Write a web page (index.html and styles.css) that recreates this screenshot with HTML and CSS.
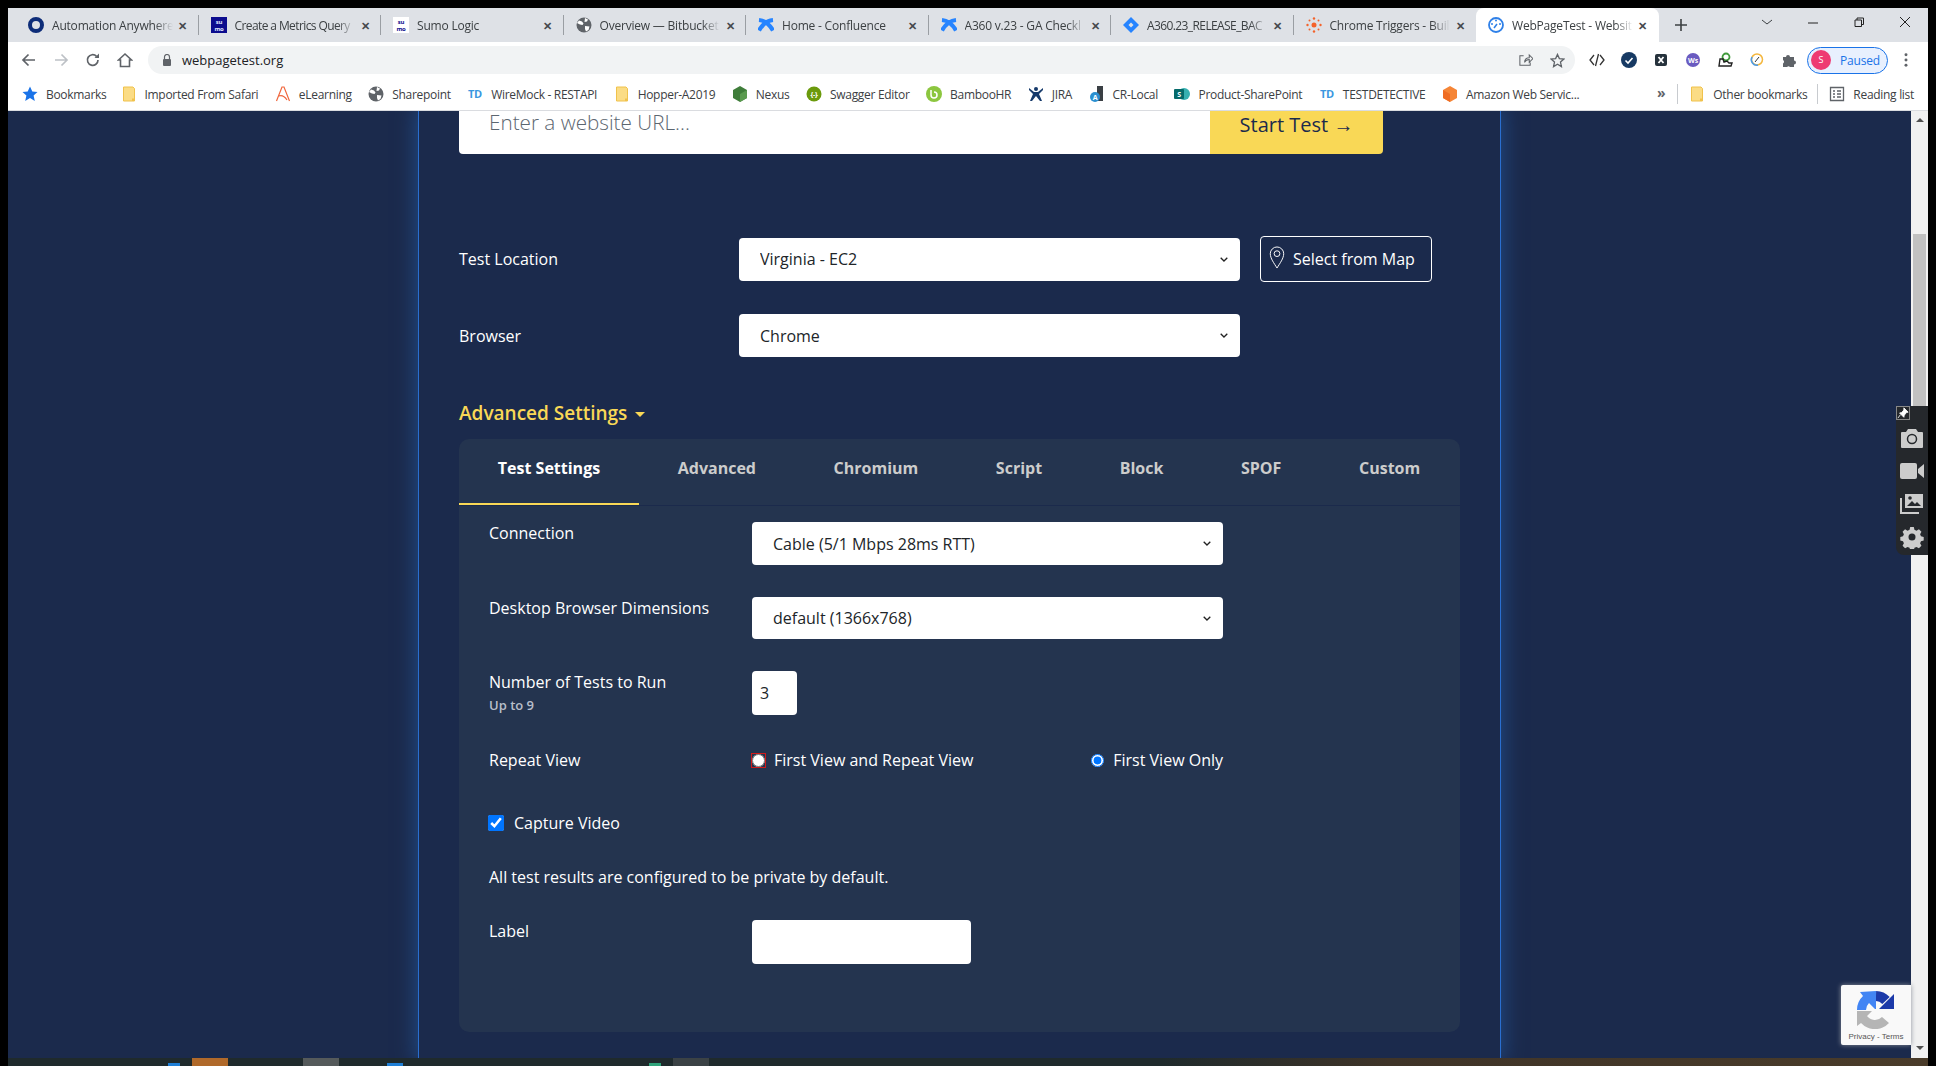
FILE: index.html
```html
<!DOCTYPE html>
<html lang="en">

<head>
    <meta charset="UTF-8">
    <meta name="viewport" content="width=device-width, initial-scale=1.0">
    <title>WebPageTest - Website Performance and Optimization Test</title>
    <link rel="stylesheet" href="styles.css">
</head>

<body>
    <svg class="defs" width="0" height="0">
        <symbol id="globe" viewBox="0 0 16 16">
            <circle cx="8" cy="8" r="7.5" fill="#5f6368" />
            <path d="M3 3.500l3 1 1.500 2-1 1.500-2.500-.5-3-1.500zM9 1l3 1.500-1 2-2.500.5zM9 9l4.500.5-1 3.500-2.500 1.500-1-2.500z" fill="#fff" />
        </symbol>
        <symbol id="confluence" viewBox="0 0 16 16">
            <path d="M1 13.500c4-7 8-10 14-10.500M1 3c6 .5 10 3.500 14 10.500" fill="none" stroke="#2684ff" stroke-width="4.200" />
        </symbol>
        <symbol id="folder" viewBox="0 0 16 16">
            <path d="M2.500 1h9.500l1.500 1.500v12.500h-11z" fill="#fbdc85" stroke="#f0c24c" />
            <path d="M11 12.500h2.500v2.500h-2.500z" fill="#f0c24c" />
        </symbol>
    </svg>

    <div class="window">
        <!-- browser chrome -->
        <div class="tabstrip">
            <div class="tab">
                <svg class="favicon" viewBox="0 0 16 16"><circle cx="8" cy="8" r="6" fill="none" stroke="#0d2c78" stroke-width="4" /></svg>
                <span class="tab-title">Automation Anywhere</span>
                <span class="tab-close">✕</span>
            </div>
            <div class="tab">
                <svg class="favicon" viewBox="0 0 16 16"><rect width="16" height="16" fill="#0c0c8e" /><text class="sumo-text" x="8" y="7" fill="#dfe6ff">su</text><text class="sumo-text" x="8" y="13.500" fill="#dfe6ff">mo</text></svg>
                <span class="tab-title tab-title-tight">Create a Metrics Query</span>
                <span class="tab-close">✕</span>
            </div>
            <div class="tab">
                <svg class="favicon" viewBox="0 0 16 16"><rect width="16" height="16" fill="#fff" /><text class="sumo-text" x="8" y="7" fill="#0c0c8e">su</text><text class="sumo-text" x="8" y="13.500" fill="#0c0c8e">mo</text></svg>
                <span class="tab-title">Sumo Logic</span>
                <span class="tab-close">✕</span>
            </div>
            <div class="tab">
                <svg class="favicon"><use href="#globe" /></svg>
                <span class="tab-title">Overview — Bitbucket</span>
                <span class="tab-close">✕</span>
            </div>
            <div class="tab">
                <svg class="favicon"><use href="#confluence" /></svg>
                <span class="tab-title">Home - Confluence</span>
                <span class="tab-close">✕</span>
            </div>
            <div class="tab">
                <svg class="favicon"><use href="#confluence" /></svg>
                <span class="tab-title">A360 v.23 - GA Checkl</span>
                <span class="tab-close">✕</span>
            </div>
            <div class="tab">
                <svg class="favicon" viewBox="0 0 16 16"><path d="M8 0l8 8-8 8-8-8z" fill="#2684ff" /><path d="M8 5.500l2.500 2.500-2.500 2.500-2.500-2.500z" fill="#dee1e6" /></svg>
                <span class="tab-title tab-title-tight">A360.23_RELEASE_BAC</span>
                <span class="tab-close">✕</span>
            </div>
            <div class="tab tab-last">
                <svg class="favicon" viewBox="0 0 16 16" fill="#f4622a"><circle cx="8" cy="8" r="2.500" /><circle cx="8" cy="1.500" r="1.200" /><circle cx="8" cy="14.500" r="1.200" /><circle cx="1.500" cy="8" r="1.200" /><circle cx="14.500" cy="8" r="1.200" /><circle cx="3.500" cy="3.500" r="1" /><circle cx="12.500" cy="3.500" r="1" /><circle cx="3.500" cy="12.500" r="1" /><circle cx="12.500" cy="12.500" r="1" /></svg>
                <span class="tab-title">Chrome Triggers - Buil</span>
                <span class="tab-close">✕</span>
            </div>
            <div class="tab tab-active">
                <svg class="favicon" viewBox="0 0 16 16"><circle cx="8" cy="8" r="7" fill="none" stroke="#2f80e8" stroke-width="1.800" /><circle cx="8" cy="3.500" r="1" fill="#2f80e8" /><circle cx="12" cy="7" r="1" fill="#2f80e8" /><circle cx="4" cy="7" r="1" fill="#2f80e8" /><path d="M6 11l3-4" stroke="#2f80e8" stroke-width="1.500" /></svg>
                <span class="tab-title">WebPageTest - Websit</span>
                <span class="tab-close">✕</span>
            </div>
            <svg class="new-tab" viewBox="0 0 12 12"><path d="M6 0v12M0 6h12" stroke="#3c4043" stroke-width="1.600" /></svg>
            <div class="window-controls">
                <svg viewBox="0 0 12 12"><path d="M1 4l5 4 5-4" fill="none" stroke="#3c4043" /></svg>
                <svg viewBox="0 0 12 12"><path d="M1 7h10" stroke="#222" /></svg>
                <svg viewBox="0 0 12 12"><path d="M2 4h6.500v6.500h-6.500zM4 4v-2h6.500v6.500h-2" fill="none" stroke="#222" /></svg>
                <svg viewBox="0 0 12 12"><path d="M1 1l10 10M11 1l-10 10" stroke="#222" /></svg>
            </div>
        </div>

        <div class="toolbar">
            <svg class="tool-icon" viewBox="0 0 16 16"><path d="M14 8h-12M7.500 2.500l-5.500 5.500 5.500 5.500" fill="none" stroke="#5f6368" stroke-width="1.700" /></svg>
            <svg class="tool-icon" viewBox="0 0 16 16"><path d="M2 8h12M8.500 2.500l5.500 5.500-5.500 5.500" fill="none" stroke="#bdc1c6" stroke-width="1.700" /></svg>
            <svg class="tool-icon" viewBox="0 0 16 16"><path d="M13 8a5.300 5.300 0 1 1-1.500-3.700" fill="none" stroke="#5f6368" stroke-width="1.700" /><path d="M14 1.500v4.500h-4.500z" fill="#5f6368" /></svg>
            <svg class="tool-icon" viewBox="0 0 16 16"><path d="M1.500 8l6.500-6 6.500 6h-2v6.500h-9v-6.500z" fill="none" stroke="#5f6368" stroke-width="1.600" /></svg>
            <div class="omnibox">
                <svg class="lock" viewBox="0 0 10 12"><path d="M2.500 5v-2a2.500 2.500 0 0 1 5 0v2" fill="none" stroke="#5f6368" stroke-width="1.200" /><rect x="1" y="5" width="8" height="7" rx="1" fill="#5f6368" /></svg>
                <span class="url">webpagetest.org</span>
                <svg class="omni-icon omni-share" viewBox="0 0 16 16"><path d="M6 3h-4v10h11v-3M7 10c0-3 2-5 5-5v-3l4 4-4 4v-3c-2 0-4 1-5 3z" fill="none" stroke="#5f6368" stroke-width="1.100" /></svg>
                <svg class="omni-icon" viewBox="0 0 16 16"><path d="M8 1.500l2 4.500 4.800.5-3.600 3.200 1 4.800-4.200-2.500-4.200 2.500 1-4.800-3.600-3.200 4.800-.5z" fill="none" stroke="#5f6368" stroke-width="1.400" /></svg>
            </div>
            <div class="extensions">
                <svg viewBox="0 0 16 16"><path d="M5 3l-4 5 4 5M11 3l4 5-4 5M9.500 2l-3 12" fill="none" stroke="#333" stroke-width="1.300" /></svg>
                <svg viewBox="0 0 16 16"><circle cx="8" cy="8" r="8" fill="#173a63" /><path d="M4.500 8.500l2.500 2.500 4.500-5" fill="none" stroke="#fff" stroke-width="1.600" /></svg>
                <svg viewBox="0 0 16 16"><rect x="2" y="2" width="12" height="12" rx="2" fill="#26323c" /><path d="M5.500 5l5 6M10.500 5l-5 6" stroke="#fff" stroke-width="1.800" /></svg>
                <svg viewBox="0 0 16 16"><circle cx="8" cy="8" r="7" fill="#6a5bc0" /><text class="ext-text" x="8" y="10.500" text-anchor="middle">Ws</text></svg>
                <svg viewBox="0 0 16 16"><circle cx="9" cy="5" r="3.500" fill="none" stroke="#3f9a3a" stroke-width="1.800" /><path d="M3 7l-1 7h12l1-3h-3l-2-2-3 1-1-3z" fill="none" stroke="#222" stroke-width="1.400" /></svg>
                <svg viewBox="0 0 16 16"><circle cx="8" cy="7.500" r="5.500" fill="none" stroke="#f4b63c" stroke-width="1.500" /><path d="M3 5a5.500 5.500 0 0 0 6 8" fill="none" stroke="#4c9be8" stroke-width="1.500" /><path d="M6 10l4-5" stroke="#333" /></svg>
                <svg viewBox="0 0 16 16"><path d="M2 5h3a2 2 0 0 1 4 0h4v3.500a2 2 0 0 1 0 4v2.500h-4a2 2 0 0 0-3 0h-4v-3.500a2 2 0 0 0 0-3.500z" fill="#5f6368" /></svg>
            </div>
            <div class="profile">
                <span class="avatar">S</span>
                <span class="profile-text">Paused</span>
            </div>
            <svg class="menu-dots" viewBox="0 0 4 16" fill="#5f6368"><circle cx="2" cy="2" r="1.700" /><circle cx="2" cy="8" r="1.700" /><circle cx="2" cy="14" r="1.700" /></svg>
        </div>

        <div class="bookmarks">
            <a class="bookmark bookmark-first"><svg viewBox="0 0 16 16"><path d="M8 .5l2.300 5 5.200.5-3.900 3.500 1.200 5.500-4.800-3-4.800 3 1.200-5.500-3.900-3.500 5.200-.5z" fill="#1a73e8" /></svg>Bookmarks</a>
            <a class="bookmark"><svg><use href="#folder" /></svg>Imported From Safari</a>
            <a class="bookmark"><svg viewBox="0 0 16 16"><path d="M1.500 15l5.500-14h2l5.500 14M4 10c3-1 6 1 8 4" fill="none" stroke="#f0663c" stroke-width="1.200" /></svg>eLearning</a>
            <a class="bookmark"><svg><use href="#globe" /></svg>Sharepoint</a>
            <a class="bookmark"><svg viewBox="0 0 16 16"><text class="td-text" x="8" y="12">TD</text></svg>WireMock - RESTAPI</a>
            <a class="bookmark"><svg><use href="#folder" /></svg>Hopper-A2019</a>
            <a class="bookmark"><svg viewBox="0 0 16 16"><path d="M8 0l7 4v8l-7 4-7-4v-8z" fill="#3f7d3a" /><path d="M8 8v8l7-4v-8z" fill="#5a9a4f" /></svg>Nexus</a>
            <a class="bookmark"><svg viewBox="0 0 16 16"><circle cx="8" cy="8" r="7.500" fill="#6b9a0c" /><text class="ext-text" x="8" y="11" text-anchor="middle">{-}</text></svg>Swagger Editor</a>
            <a class="bookmark"><svg viewBox="0 0 16 16"><circle cx="8" cy="8" r="8" fill="#8cc63f" /><path d="M5 4v5a3 3 0 1 0 3-3" fill="none" stroke="#fff" stroke-width="1.500" /></svg>BambooHR</a>
            <a class="bookmark"><svg viewBox="0 0 16 16" fill="#163a6b"><circle cx="8" cy="3" r="2" /><path d="M1 2l5 4h4l5-4v2l-4 4 3 7h-2l-4-5-4 5h-2l3-7-4-4z" /></svg>JIRA</a>
            <a class="bookmark"><svg viewBox="0 0 16 16"><rect x="8" y="0" width="6" height="15" fill="#3a3f44" /><circle cx="6" cy="11" r="5" fill="#2a8fd0" /><text class="ext-text" x="6" y="13.500" text-anchor="middle">A</text></svg>CR-Local</a>
            <a class="bookmark"><svg viewBox="0 0 16 16"><circle cx="10" cy="8" r="6" fill="#36b0b0" /><rect x="0" y="3" width="10" height="10" rx="1" fill="#056a6a" /><text class="ext-text" x="5" y="11" text-anchor="middle">S</text></svg>Product-SharePoint</a>
            <a class="bookmark"><svg viewBox="0 0 16 16"><text class="td-text" x="8" y="12">TD</text></svg>TESTDETECTIVE</a>
            <a class="bookmark"><svg viewBox="0 0 16 16"><path d="M8 0l7 4v8l-7 4-7-4v-8z" fill="#f58536" /><path d="M8 8v8l-7-4v-8z" fill="#ef6c22" /></svg>Amazon Web Servic...</a>
            <span class="bookmark-more">»</span>
            <span class="bookmark-sep"></span>
            <a class="bookmark"><svg><use href="#folder" /></svg>Other bookmarks</a>
            <span class="bookmark-sep bookmark-sep-last"></span>
            <a class="bookmark"><svg viewBox="0 0 16 16"><path d="M1.500 1.500h13v13h-13z" fill="none" stroke="#5f6368" stroke-width="1.300" /><path d="M4 5h2M8 5h4M4 8h2M8 8h4M4 11h2M8 11h4" stroke="#5f6368" stroke-width="1.300" /></svg>Reading list</a>
        </div>

        <!-- page -->
        <div class="viewport">
            <div class="page">
                <div class="column">
                    <form class="start-form">
                        <div class="url-box">
                            <input class="url-input" type="text" placeholder="Enter a website URL...">
                            <button class="start-btn" type="button">Start Test →</button>
                        </div>

                        <div class="main-row main-row-first">
                            <label class="main-label">Test Location</label>
                            <select class="field main-select">
                                <option>Virginia - EC2</option>
                            </select>
                            <button class="map-btn" type="button">
                                <svg class="pin" viewBox="0 0 16 24"><path d="M8 1a7 7 0 0 1 7 7c0 5-4 10-7 15-3-5-7-10-7-15a7 7 0 0 1 7-7z" fill="none" stroke="#fff" /><circle cx="8" cy="8" r="3" fill="none" stroke="#fff" /></svg>
                                Select from Map
                            </button>
                        </div>
                        <div class="main-row">
                            <label class="main-label">Browser</label>
                            <select class="field main-select">
                                <option>Chrome</option>
                            </select>
                        </div>

                        <div class="advanced-toggle">Advanced Settings <span class="caret"></span></div>

                        <div class="panel">
                            <div class="panel-tabs">
                                <span class="panel-tab panel-tab-active">Test Settings</span>
                                <span class="panel-tab">Advanced</span>
                                <span class="panel-tab">Chromium</span>
                                <span class="panel-tab">Script</span>
                                <span class="panel-tab">Block</span>
                                <span class="panel-tab">SPOF</span>
                                <span class="panel-tab">Custom</span>
                            </div>
                            <div class="panel-body">
                                <div class="row">
                                    <label class="row-label">Connection</label>
                                    <select class="field panel-select">
                                        <option>Cable (5/1 Mbps 28ms RTT)</option>
                                    </select>
                                </div>
                                <div class="row">
                                    <label class="row-label">Desktop Browser Dimensions</label>
                                    <select class="field panel-select panel-select-short">
                                        <option>default (1366x768)</option>
                                    </select>
                                </div>
                                <div class="row">
                                    <label class="row-label">Number of Tests to Run<small class="hint">Up to 9</small></label>
                                    <input class="field number-input" type="text" value="3">
                                </div>
                                <div class="row row-repeat">
                                    <label class="row-label">Repeat View</label>
                                    <div class="radios">
                                        <label class="radio radio-flagged"><input type="radio" name="fvonly">First View and Repeat View</label>
                                        <label class="radio"><input type="radio" name="fvonly" checked>First View Only</label>
                                    </div>
                                </div>
                                <label class="capture"><input type="checkbox" checked>Capture Video</label>
                                <p class="note">All test results are configured to be private by default.</p>
                                <div class="row">
                                    <label class="row-label">Label</label>
                                    <input class="field label-input" type="text">
                                </div>
                            </div>
                        </div>
                    </form>
                </div>
            </div>

            <div class="scrollbar">
                <span class="arrow-up"></span>
                <span class="thumb"></span>
                <span class="arrow-down"></span>
            </div>

            <!-- capture extension widget -->
            <div class="widget">
                <svg class="widget-pin" viewBox="0 0 14 14"><path d="M8 1l5 5-2 .5-2.500 3-.5 2.500-5-5 2.500-.5 2.500-3zM4 9l-3 4" fill="#fff" stroke="#fff" /></svg>
                <svg viewBox="0 0 24 24" fill="#ccc"><path d="M8 3h8l2 3h4a1 1 0 0 1 1 1v14a1 1 0 0 1-1 1h-20a1 1 0 0 1-1-1v-14a1 1 0 0 1 1-1h4z" /><circle cx="12" cy="13" r="4.500" fill="none" stroke="#25282c" stroke-width="1.500" /></svg>
                <svg viewBox="0 0 24 24" fill="#ccc"><rect x="0" y="4" width="17" height="16" rx="2" /><path d="M18 10l6-5v14l-6-5z" /></svg>
                <svg viewBox="0 0 24 24" fill="#ccc"><path d="M5 2h18v14h-18z" /><path d="M7 14l5-5 3 3 2-2 4 4z" fill="#25282c" /><circle cx="10" cy="6" r="1.800" fill="#25282c" /><path d="M1 6v15h18" fill="none" stroke="#ccc" stroke-width="2" /></svg>
                <svg viewBox="0 0 24 24" fill="#ccc"><path d="M10 1h4l.7 3 2.300 1 2.700-1.500 2.800 2.800-1.500 2.700 1 2.300 3 .7v4l-3 .7-1 2.300 1.500 2.700-2.800 2.800-2.700-1.500-2.300 1-.7 3h-4l-.7-3-2.300-1-2.700 1.500-2.800-2.800 1.500-2.700-1-2.300-3-.7v-4l3-.7 1-2.300-1.500-2.700 2.800-2.800 2.700 1.500 2.300-1z" transform="translate(1.200 1.200) scale(.9)" /><circle cx="12" cy="12" r="3.500" fill="#25282c" /></svg>
            </div>

            <!-- recaptcha badge -->
            <div class="recaptcha">
                <svg class="recaptcha-logo" viewBox="0 0 38 38">
                    <path d="M19 5a14 14 0 0 1 10 4.500" fill="none" stroke="#1c3aa9" stroke-width="10" />
                    <path d="M37 3v15h-15z" fill="#1c3aa9" />
                    <path d="M19 0v18h-1l-6-6a10 10 0 0 0-3 7h-9a19 19 0 0 1 6-14l-3-4z" fill="#4285f4" />
                    <path d="M0 20h15l-5 5a10 10 0 0 0 15 1l7 6a19 19 0 0 1-28 0l-4 3z" fill="#b5b5b5" />
                </svg>
                <span class="recaptcha-text">Privacy - Terms</span>
            </div>
        </div>

        <!-- cut off windows taskbar -->
        <div class="taskbar">
            <span class="task task-bit task-blue-1"></span>
            <span class="task task-orange"></span>
            <span class="task task-gray"></span>
            <span class="task task-bit task-blue-2"></span>
            <span class="task task-bit task-green"></span>
            <span class="task task-dark"></span>
        </div>
    </div>
</body>

</html>
```
FILE: styles.css
```css
* {
    box-sizing: border-box;
}

html,
body {
    height: 100%;
}

body {
    margin: 0;
    padding: 8px 8px 0 8px;
    background-color: #000;
    font-family: 'Open Sans', sans-serif;
    overflow: hidden;
}

.defs {
    position: absolute;
}

.window {
    width: 1920px;
    height: 1058px;
    display: flex;
    flex-direction: column;
}

/* Tab strip */
.tabstrip {
    height: 34px;
    background-color: #dee1e6;
    padding-left: 8px;
    display: flex;
    align-items: stretch;
    flex: none;
}

.tab {
    width: 182.5px;
    flex: none;
    display: flex;
    align-items: center;
    padding: 0 8px 0 12px;
    position: relative;
    color: #3c4043;
    font-size: 12px;
    letter-spacing: -.2px;
}

.tab::after {
    content: '';
    position: absolute;
    right: 0;
    top: 7px;
    bottom: 7px;
    width: 1px;
    background-color: #9a9ea3;
}

.tab-last::after,
.tab-active::after {
    display: none;
}

.tab-active {
    background-color: #fff;
    border-radius: 8px 8px 0 0;
    color: #3c4043;
}

.favicon {
    width: 16px;
    height: 16px;
    flex: none;
    margin-right: 8px;
}

.sumo-text {
    font-size: 6px;
    font-weight: 700;
    text-anchor: middle;
}

.td-text {
    font-size: 11px;
    font-weight: 700;
    text-anchor: middle;
    fill: #3a97e0;
}

.tab-title {
    flex: 1;
    white-space: nowrap;
    overflow: hidden;
    -webkit-mask-image: linear-gradient(to right, #000 85%, transparent);
    mask-image: linear-gradient(to right, #000 85%, transparent);
}

.tab-title-tight {
    letter-spacing: -.6px;
}

.tab-close {
    width: 16px;
    font-size: 11px;
    font-weight: 700;
    text-align: center;
    color: #45494d;
    margin-left: 2px;
    flex: none;
}

.new-tab {
    width: 12px;
    height: 12px;
    margin: 11px 0 0 16px;
}

.window-controls {
    margin-left: auto;
    display: flex;
    align-items: center;
    gap: 34px;
    padding: 0 17px 6px 0;
}

.window-controls svg {
    width: 12px;
    height: 12px;
}

/* Toolbar */
.toolbar {
    height: 36px;
    background-color: #fff;
    display: flex;
    align-items: center;
    padding-left: 13px;
    flex: none;
}

.tool-icon {
    width: 16px;
    height: 16px;
    margin-right: 16px;
    flex: none;
}

.omnibox {
    width: 1427px;
    height: 28px;
    margin-left: -1px;
    background-color: #f1f3f4;
    border-radius: 14px;
    display: flex;
    align-items: center;
    padding-left: 14px;
    flex: none;
}

.lock {
    width: 10px;
    height: 12px;
    margin-right: 10px;
}

.url {
    font-size: 13px;
    color: #202124;
}

.omni-icon {
    width: 15px;
    height: 15px;
    margin-left: 17px;
}

.omni-share {
    margin-left: auto;
}

.omnibox .omni-icon:last-child {
    margin-right: 10px;
}

.extensions {
    display: flex;
    gap: 16px;
    margin-left: 14px;
    flex: none;
}

.extensions svg {
    width: 16px;
    height: 16px;
}

.ext-text {
    font-size: 7px;
    font-weight: 700;
    fill: #fff;
}

.profile {
    width: 81px;
    height: 27px;
    margin-left: 10px;
    border: 1px solid #1a73e8;
    border-radius: 14px;
    background-color: #e8f0fe;
    display: flex;
    align-items: center;
    padding-left: 3px;
    flex: none;
}

.avatar {
    width: 20px;
    height: 20px;
    border-radius: 50%;
    background-color: #ee3a72;
    color: #fff;
    font-size: 9px;
    line-height: 20px;
    text-align: center;
    margin-right: 9px;
}

.profile-text {
    font-size: 12px;
    letter-spacing: -.2px;
    color: #1a73e8;
}

.menu-dots {
    width: 4px;
    height: 14px;
    margin-left: 16px;
}

/* Bookmarks bar */
.bookmarks {
    height: 33px;
    background-color: #fff;
    border-bottom: 1px solid #dadce0;
    display: flex;
    align-items: center;
    gap: 16.5px;
    padding: 0 14px 0 14px;
    font-size: 12px;
    letter-spacing: -.3px;
    color: #3c4043;
    white-space: nowrap;
    flex: none;
}

.bookmark {
    display: flex;
    align-items: center;
    gap: 8px;
}

.bookmark-first {
    margin-right: -2.5px;
}

.bookmark svg {
    width: 16px;
    height: 16px;
    flex: none;
}

.bookmark-more {
    margin-left: auto;
    font-weight: 700;
    font-size: 14px;
    color: #5f6368;
    margin-top: -3px;
}

.bookmark-sep {
    width: 1px;
    height: 20px;
    background-color: #c8cbcf;
    margin: 0 -5px;
}

.bookmark-sep-last {
    margin-left: -7px;
}

/* Page area */
.viewport {
    flex: 1;
    display: flex;
    position: relative;
    overflow: hidden;
    min-height: 0;
}

.page {
    flex: 1;
    background-color: #1b2a4c;
    padding-left: 410px;
    overflow: hidden;
}

.column {
    width: 1083px;
    height: 100%;
    background-color: #1b2a4c;
    border-left: 1px solid #2a6fd0;
    border-right: 1px solid #2a6fd0;
    box-shadow: 0 0 18px 3px #204880;
    padding-left: 40px;
}

.url-box {
    width: 924px;
    height: 43px;
    display: flex;
    border-radius: 0 0 4px 4px;
    overflow: hidden;
}

.url-input {
    flex: 1;
    border: none;
    background-color: #fff;
    padding: 0 0 21px 30px;
    font-family: 'Open Sans', sans-serif;
    font-size: 20.7px;
    font-weight: 300;
    outline: none;
}

.url-input::placeholder {
    color: #5c6670;
    opacity: 1;
}

.start-btn {
    width: 173px;
    border: none;
    background-color: #f9d856;
    padding: 0 0 21px 0;
    font-family: 'Open Sans', sans-serif;
    font-size: 20px;
    color: #1b2a4c;
}

.main-row {
    display: flex;
    align-items: center;
    margin-top: 32px;
}

.main-row-first {
    margin-top: 82px;
}

.main-label {
    width: 280px;
    font-size: 16px;
    color: #fff;
}

.field {
    border: none;
    border-radius: 4px;
    background-color: #fff;
    font-family: 'Open Sans', sans-serif;
    font-size: 16px;
    color: #212529;
    outline: none;
}

select.field {
    appearance: none;
    padding-left: 21px;
    background-image: url("data:image/svg+xml,%3Csvg xmlns='http://www.w3.org/2000/svg' width='8' height='5'%3E%3Cpath d='M.7.7L4 4l3.300-3.300' fill='none' stroke='%23222' stroke-width='1.300'/%3E%3C/svg%3E");
    background-repeat: no-repeat;
    background-position: right 12px center;
}

.panel-select {
    padding-left: 17px;
}

.main-select {
    width: 501px;
    height: 43px;
}

.map-btn {
    width: 172px;
    height: 46px;
    margin-left: 20px;
    border: 1px solid #fff;
    border-radius: 4px;
    background: none;
    color: #fff;
    font-family: 'Open Sans', sans-serif;
    font-size: 16px;
    display: flex;
    align-items: center;
    gap: 8px;
    padding: 0 0 0 8px;
}

.pin {
    width: 16px;
    height: 23px;
    margin-top: -4px;
}

.advanced-toggle {
    margin-top: 44px;
    height: 24px;
    line-height: 24px;
    font-size: 19px;
    font-weight: 600;
    color: #f9d856;
}

.caret {
    display: inline-block;
    width: 0;
    height: 0;
    margin: 0 0 3px 3px;
    border-left: 5px solid transparent;
    border-right: 5px solid transparent;
    border-top: 5px solid #f9d856;
}

/* Advanced settings panel */
.panel {
    width: 1001px;
    height: 593px;
    margin-top: 14px;
    background-color: #24344f;
    border-radius: 10px;
}

.panel-tabs {
    height: 67px;
    display: flex;
    border-bottom: 1px solid #1b2a4c;
}

.panel-tab {
    padding: 18px 38.8px 0 38.8px;
    height: 66px;
    font-size: 16px;
    font-weight: 700;
    color: #ccc;
    white-space: nowrap;
}

.panel-tab-active {
    color: #fff;
    border-bottom: 2px solid #f9d856;
}

.panel-body {
    padding: 16px 0 0 30px;
}

.row {
    display: flex;
    align-items: flex-start;
    margin-bottom: 32px;
}

.row-label {
    width: 263px;
    font-size: 16px;
    line-height: 22px;
    color: #fff;
}

.hint {
    display: block;
    font-size: 13px;
    font-weight: 600;
    line-height: 24px;
    color: #b8bfca;
}

.panel-select {
    width: 471px;
    height: 43px;
}

.panel-select-short {
    height: 42px;
}

.number-input {
    width: 45px;
    height: 44px;
    padding-left: 8px;
}

.label-input {
    width: 219px;
    height: 44px;
}

.row-repeat {
    margin-bottom: 41px;
}

.radios {
    display: flex;
    width: 471px;
    justify-content: space-between;
}

.radio {
    display: flex;
    align-items: center;
    gap: 9px;
    font-size: 16px;
    line-height: 22px;
    color: #fff;
}

.radio input {
    width: 13px;
    height: 13px;
    margin: 0;
    accent-color: #0075ff;
}

.radio-flagged input {
    outline: 1px solid #d11a1a;
}

.capture {
    display: flex;
    align-items: center;
    gap: 10px;
    margin-left: -1px;
    font-size: 16px;
    line-height: 22px;
    color: #fff;
}

.capture input {
    width: 16px;
    height: 16px;
    margin: 0;
    accent-color: #0075ff;
}

.note {
    margin: 32px 0;
    font-size: 16px;
    line-height: 22px;
    color: #fff;
}

/* Scrollbar */
.scrollbar {
    width: 17px;
    flex: none;
    background-color: #f1f1f1;
    position: relative;
}

.thumb {
    position: absolute;
    left: 2px;
    right: 2px;
    top: 123px;
    height: 300px;
    background-color: #c1c1c1;
}

.arrow-up,
.arrow-down {
    position: absolute;
    left: 5px;
    width: 0;
    height: 0;
    border-left: 4px solid transparent;
    border-right: 4px solid transparent;
}

.arrow-up {
    top: 7px;
    border-bottom: 4px solid #505050;
}

.arrow-down {
    bottom: 8px;
    border-top: 4px solid #505050;
}

/* Extension widget sits over the scrollbar */
.widget {
    position: absolute;
    right: 0;
    top: 295px;
    width: 32px;
    height: 149px;
    background-color: #25282c;
    border-radius: 8px 0 0 8px;
    display: flex;
    flex-direction: column;
    align-items: center;
    gap: 9px;
    padding-top: 20px;
}

.widget svg {
    width: 24px;
    height: 24px;
    flex: none;
}

.widget .widget-pin {
    position: absolute;
    left: 0;
    top: 0;
    width: 14px;
    height: 14px;
    background-color: #25282c;
    border: 1px solid #888;
}

/* reCAPTCHA badge */
.recaptcha {
    position: absolute;
    right: 17px;
    top: 874px;
    width: 70px;
    height: 60px;
    background-color: #f9f9f9;
    border-radius: 2px 0 0 2px;
    box-shadow: 0 0 5px #8a8f99;
    display: flex;
    flex-direction: column;
    align-items: center;
    padding-top: 6px;
}

.recaptcha-logo {
    width: 38px;
    height: 38px;
}

.recaptcha-text {
    font-family: 'Liberation Sans', sans-serif;
    font-size: 8px;
    color: #555;
    margin-top: 3px;
    white-space: nowrap;
}

/* Taskbar */
.taskbar {
    height: 8px;
    flex: none;
    background: linear-gradient(to right, #1f2a2c 60%, #3f3428 72%, #4a3c2a);
    display: flex;
}

.task {
    width: 36px;
    flex: none;
}

.task-bit {
    height: 3px;
    align-self: flex-end;
    width: 12px;
}

.task-blue-1 {
    margin-left: 160px;
    background-color: #1f7fd6;
}

.task-orange {
    margin-left: 12px;
    background-color: #b0692a;
}

.task-gray {
    margin-left: 75px;
    background-color: #555a5b;
}

.task-blue-2 {
    margin-left: 48px;
    width: 16px;
    background-color: #1f7fd6;
}

.task-green {
    margin-left: 246px;
    background-color: #2fa37a;
}

.task-dark {
    margin-left: 12px;
    background-color: #3b4245;
}
```
